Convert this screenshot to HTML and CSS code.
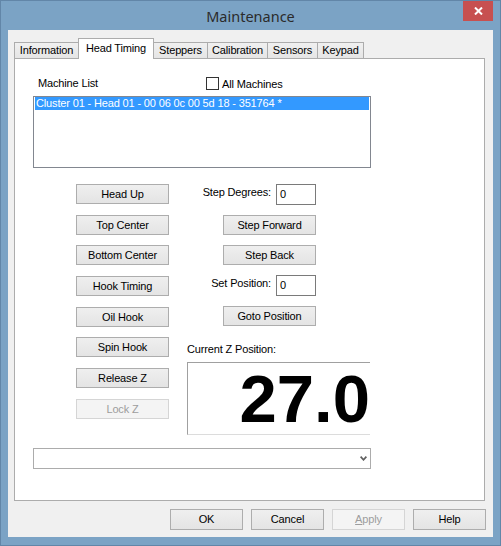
FILE: index.html
```html
<!DOCTYPE html>
<html>
<head>
<meta charset="utf-8">
<title>Maintenance</title>
<link rel="stylesheet" href="styles.css">
</head>
<body>
<div class="window">
  <div class="titlebar">
    <span class="title">Maintenance</span>
    <div class="close"><svg width="9" height="8" viewBox="0 0 9 8"><path d="M1 0.5L8 7.5M8 0.5L1 7.5" stroke="#ffffff" stroke-width="2" fill="none"/></svg></div>
  </div>
  <div class="client">
    <div class="tabs">
      <div class="tab w-info">Information</div>
      <div class="tab active w-head">Head Timing</div>
      <div class="tab w-step">Steppers</div>
      <div class="tab w-cal">Calibration</div>
      <div class="tab w-sens">Sensors</div>
      <div class="tab w-key">Keypad</div>
    </div>
    <div class="panel">
      <div class="list-header">
        <span class="list-label">Machine List</span>
        <span class="check"><span class="box"></span>All Machines</span>
      </div>
      <div class="listbox">
        <div class="item selected">Cluster 01 - Head 01 - 00 06 0c 00 5d 18 - 351764 *</div>
      </div>
      <div class="controls">
        <div class="left-col">
          <div class="btn">Head Up</div>
          <div class="btn">Top Center</div>
          <div class="btn">Bottom Center</div>
          <div class="btn">Hook Timing</div>
          <div class="btn">Oil Hook</div>
          <div class="btn">Spin Hook</div>
          <div class="btn">Release Z</div>
          <div class="btn disabled">Lock Z</div>
        </div>
        <div class="right-col">
          <div class="steps">
            <div class="field"><span class="field-label">Step Degrees:</span><div class="textbox">0</div></div>
            <div class="btn">Step Forward</div>
            <div class="btn">Step Back</div>
            <div class="field"><span class="field-label">Set Position:</span><div class="textbox">0</div></div>
            <div class="btn">Goto Position</div>
          </div>
          <div class="zlabel">Current Z Position:</div>
          <div class="zdisplay">27.0</div>
        </div>
      </div>
      <div class="combo"><svg width="7" height="5" viewBox="0 0 7 5"><path d="M0.6 0.6L3.5 3.8L6.4 0.6" stroke="#606060" stroke-width="1.7" fill="none"/></svg></div>
    </div>
    <div class="actions">
      <div class="btn wide">OK</div>
      <div class="btn wide">Cancel</div>
      <div class="btn wide disabled"><u>A</u>pply</div>
      <div class="btn wide">Help</div>
    </div>
  </div>
</div>
</body>
</html>
```
FILE: styles.css
```css
html, body {
  margin: 0;
  padding: 0;
}
body {
  width: 501px;
  height: 546px;
  overflow: hidden;
  font-family: "Liberation Sans", Arial, sans-serif;
  font-size: 11px;
  letter-spacing: -0.15px;
  color: #000;
  background: #7aa2c4;
}
.window {
  box-sizing: border-box;
  width: 501px;
  height: 546px;
  border: 1px solid #6286a8;
  background: #7ba3c5;
  display: flex;
  flex-direction: column;
}
.titlebar {
  height: 29px;
  flex: none;
  display: grid;
  grid-template-columns: 1fr auto 1fr;
  align-items: center;
  padding: 0 7px;
}
.title {
  grid-column: 2;
  font-family: "Noto Sans", sans-serif;
  font-size: 14.5px;
  letter-spacing: 0;
  color: #2b2b2b;
  line-height: 1;
  margin-top: 1px;
}
.close {
  grid-column: 3;
  justify-self: end;
  align-self: start;
  width: 30px;
  height: 20px;
  background: #c75050;
  display: flex;
  align-items: center;
  justify-content: center;
}
.client {
  flex: 1;
  margin: 0 7px 8px 7px;
  background: #f0f0f0;
  display: flex;
  flex-direction: column;
}
.tabs {
  display: flex;
  align-items: flex-end;
  height: 20px;
  margin: 8px 0 0 6px;
  position: relative;
  z-index: 1;
}
.tab {
  box-sizing: border-box;
  height: 16px;
  border: 1px solid #acacac;
  border-bottom: 0;
  margin-left: -1px;
  background: linear-gradient(#f0f0f0, #e5e5e5);
  text-align: center;
  line-height: 15px;
}
.tab:first-child { margin-left: 0; }
.tab.active {
  height: 21px;
  margin-bottom: -1px;
  background: #fff;
  padding-top: 2px;
  position: relative;
  z-index: 2;
}
.w-info { width: 65px; }
.w-head { width: 76px; }
.w-step { width: 55px; }
.w-cal { width: 61px; }
.w-sens { width: 51px; }
.w-key { width: 47px; }
.panel {
  box-sizing: border-box;
  width: 471px;
  height: 443px;
  margin-left: 6px;
  border: 1px solid #acacac;
  background: #fff;
  padding: 18px 0 0 18px;
  flex: none;
}
.list-header {
  display: flex;
  align-items: center;
  height: 13px;
}
.list-label {
  box-sizing: border-box;
  width: 173px;
  padding-left: 5px;
  margin-top: -1px;
}
.check {
  display: flex;
  align-items: center;
  gap: 3px;
}
.box {
  box-sizing: border-box;
  width: 13px;
  height: 13px;
  border: 1px solid #333;
  background: #fff;
}
.listbox {
  box-sizing: border-box;
  margin-top: 6px;
  width: 338px;
  height: 72px;
  border: 1px solid #828790;
  padding: 0 1px;
}
.item {
  height: 13px;
  line-height: 13px;
  padding-left: 1px;
  white-space: nowrap;
}
.item.selected {
  background: #3399ff;
  color: #fff;
}
.controls {
  display: flex;
  margin-top: 16px;
}
.left-col {
  margin-left: 43px;
  width: 93px;
  display: grid;
  grid-auto-rows: 20px;
  row-gap: 10.7px;
  align-content: start;
}
.btn {
  box-sizing: border-box;
  width: 93px;
  height: 20px;
  border: 1px solid #adadad;
  background: linear-gradient(#efefef, #e4e4e4);
  text-align: center;
  line-height: 18px;
  white-space: nowrap;
}
.btn.disabled {
  background: #f4f4f4;
  border-color: #d5d5d5;
  color: #9d9d9d;
}
.btn.wide {
  width: 73px;
  height: 21px;
  line-height: 19px;
}
.right-col {
  margin-left: 18px;
  display: flex;
  flex-direction: column;
}
.steps {
  width: 129px;
  display: flex;
  flex-direction: column;
  align-items: flex-end;
  gap: 10px;
}
.field {
  display: flex;
  align-items: flex-start;
  gap: 5px;
  height: 21px;
}
.field-label {
  line-height: 13px;
  margin-top: 2px;
}
.textbox {
  box-sizing: border-box;
  width: 40px;
  height: 21px;
  border: 1px solid #7a7a7a;
  background: #fff;
  line-height: 19px;
  padding-left: 3px;
}
.zlabel {
  margin-top: 17px;
  line-height: 13px;
}
.zdisplay {
  box-sizing: border-box;
  margin-top: 6px;
  width: 183px;
  height: 73px;
  border: 1px solid #a0a0a0;
  border-right: 0;
  border-bottom-color: #dcdcdc;
  background: #fff;
  font-weight: bold;
  font-size: 67px;
  letter-spacing: 0;
  line-height: 71px;
  text-align: right;
  overflow: hidden;
  white-space: nowrap;
}
.combo {
  box-sizing: border-box;
  margin-top: 13px;
  width: 338px;
  height: 21px;
  border: 1px solid #acacac;
  background: #fff;
  display: flex;
  align-items: center;
  justify-content: flex-end;
  padding-right: 3px;
}
.actions {
  display: flex;
  justify-content: flex-end;
  gap: 8px;
  padding: 8px 7px 0 0;
}
```
